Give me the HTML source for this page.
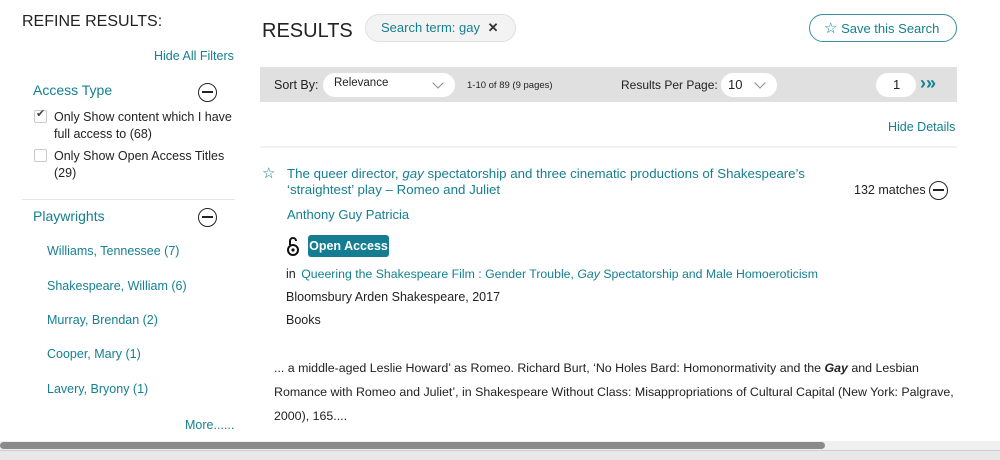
<!DOCTYPE html>
<html><head><meta charset="utf-8"><style>
*{margin:0;padding:0;box-sizing:border-box}
body{width:1000px;height:460px;overflow:hidden;background:#fff;font-family:"Liberation Sans",sans-serif;color:#222;position:relative;font-size:13px}
.a{position:absolute;white-space:nowrap}
.t{color:#157f90}
.circ{position:absolute;width:19px;height:19px;border:1.7px solid #222;border-radius:50%}
.circ:after{content:"";position:absolute;left:3px;right:3px;top:7px;height:1.7px;background:#222}
.cb{position:absolute;width:13px;height:13px;border:1px solid #ccc;border-radius:2px;background:#fff}
.pill{position:absolute;background:#fff;border-radius:13px}
.chev{position:absolute;width:8px;height:8px;border-right:1px solid #888;border-bottom:1px solid #888;transform:rotate(45deg)}
</style></head><body>
<div class="a" style="left:22px;top:13px;font-size:16px">REFINE RESULTS:</div>
<div class="a t" style="left:154px;top:49px;font-size:12.5px">Hide All Filters</div>
<div class="a t" style="left:33px;top:82px;font-size:14px">Access Type</div>
<div class="circ" style="left:198px;top:83px"></div>
<div class="cb" style="left:34px;top:110px"></div><div class="a" style="left:36px;top:107px;font-size:11px;color:#444">✔</div>
<div class="a" style="left:54px;top:109px;font-size:12.5px;line-height:17px">Only Show content which I have<br>full access to (68)</div>
<div class="cb" style="left:34px;top:149px"></div>
<div class="a" style="left:54px;top:148px;font-size:12.5px;line-height:17px">Only Show Open Access Titles<br>(29)</div>
<div class="a" style="left:22px;top:199px;width:213px;height:1px;background:#e6e6e6"></div>
<div class="a t" style="left:33px;top:208px;font-size:14px">Playwrights</div>
<div class="circ" style="left:198px;top:208px"></div>
<div class="a t" style="left:47px;top:244px;font-size:12.5px">Williams, Tennessee (7)</div>
<div class="a t" style="left:47px;top:279px;font-size:12.5px">Shakespeare, William (6)</div>
<div class="a t" style="left:47px;top:313px;font-size:12.5px">Murray, Brendan (2)</div>
<div class="a t" style="left:47px;top:347px;font-size:12.5px">Cooper, Mary (1)</div>
<div class="a t" style="left:47px;top:382px;font-size:12.5px">Lavery, Bryony (1)</div>
<div class="a t" style="left:185px;top:418px;font-size:12.5px">More......</div>

<div class="a" style="left:262px;top:20px;font-size:20px">RESULTS</div>
<div class="a" style="left:365px;top:14px;width:151px;height:28px;background:#f3f3f3;border:1px solid #e0e0e0;border-radius:14px"></div>
<div class="a t" style="left:381px;top:20px;font-size:13px">Search term: gay <b style="color:#333;margin-left:4px">✕</b></div>
<div class="a" style="left:809px;top:14px;width:148px;height:28px;border:1px solid #3b8fa0;border-radius:14px"></div>
<div class="a t" style="left:824px;top:19px;font-size:13px"><span style="font-size:15px">☆</span> Save this Search</div>

<div class="a" style="left:260px;top:67px;width:697px;height:35px;background:#e0e0e0"></div>
<div class="a" style="left:274px;top:78px;font-size:12.5px">Sort By:</div>
<div class="pill" style="left:323px;top:73px;width:132px;height:24px"></div>
<div class="a" style="left:334px;top:77px;font-size:11.5px">Relevance</div>
<div class="chev" style="left:434px;top:79px"></div>
<div class="a" style="left:467px;top:80px;font-size:9.5px">1-10 of 89 (9 pages)</div>
<div class="a" style="left:621px;top:78px;font-size:12px">Results Per Page:</div>
<div class="pill" style="left:721px;top:73px;width:56px;height:24px"></div>
<div class="a" style="left:728px;top:77px;font-size:13px">10</div>
<div class="chev" style="left:756px;top:79px"></div>
<div class="pill" style="left:876px;top:73px;width:40px;height:24px"></div>
<div class="a" style="left:893px;top:77px;font-size:13px">1</div>
<div class="a t" style="left:920px;top:73px;font-size:18px;font-weight:bold">›»</div>

<div class="a t" style="left:888px;top:120px;font-size:12.5px">Hide Details</div>
<div class="a" style="left:260px;top:146px;width:697px;height:2px;background:#f2f2f2"></div>
<div class="a t" style="left:262px;top:164px;font-size:15px">☆</div>
<div class="a t" style="left:287px;top:166px;font-size:13.3px;line-height:16px">The queer director, <i>gay</i> spectatorship and three cinematic productions of Shakespeare’s<br>‘straightest’ play – Romeo and Juliet</div>
<div class="a" style="left:854px;top:183px;font-size:12.5px">132 matches</div>
<div class="circ" style="left:929px;top:181px"></div>
<div class="a t" style="left:287px;top:207px;font-size:13px">Anthony Guy Patricia</div>
<div class="a" style="left:287px;top:236px;width:12px;height:21px">
<svg width="12" height="21" viewBox="0 0 12 21"><path d="M3 9V5a3 3 0 0 1 6 0" fill="none" stroke="#111" stroke-width="2"/><circle cx="6" cy="14" r="5" fill="none" stroke="#111" stroke-width="2"/><circle cx="6" cy="14" r="1.6" fill="#111"/></svg></div>
<div class="a" style="left:308px;top:235px;width:81px;height:22px;background:#147d92;border-radius:3px;color:#fff;font-weight:bold;font-size:12.5px;line-height:22px;text-align:center">Open Access</div>
<div class="a" style="left:286px;top:267px;font-size:12.5px">in <span class="t" style="margin-left:2px;font-size:12.3px">Queering the Shakespeare Film : Gender Trouble, <i>Gay</i> Spectatorship and Male Homoeroticism</span></div>
<div class="a" style="left:286px;top:290px;font-size:12.5px">Bloomsbury Arden Shakespeare, 2017</div>
<div class="a" style="left:286px;top:313px;font-size:12.5px">Books</div>
<div class="a" style="left:274px;top:356px;font-size:12.4px;line-height:24px">... a middle-aged Leslie Howard’ as Romeo. Richard Burt, ‘No Holes Bard: Homonormativity and the <b><i>Gay</i></b> and Lesbian<br>Romance with Romeo and Juliet’, in Shakespeare Without Class: Misappropriations of Cultural Capital (New York: Palgrave,<br>2000), 165....</div>

<div class="a" style="left:0;top:441px;width:1000px;height:9px;background:#f0f0f0"></div>
<div class="a" style="left:0;top:442px;width:825px;height:7px;background:#8a8a8a;border-radius:4px"></div>
<div class="a" style="left:0;top:450px;width:1000px;height:10px;background:#e8e8e8;border-top:1px solid #ccc"></div>
</body></html>
